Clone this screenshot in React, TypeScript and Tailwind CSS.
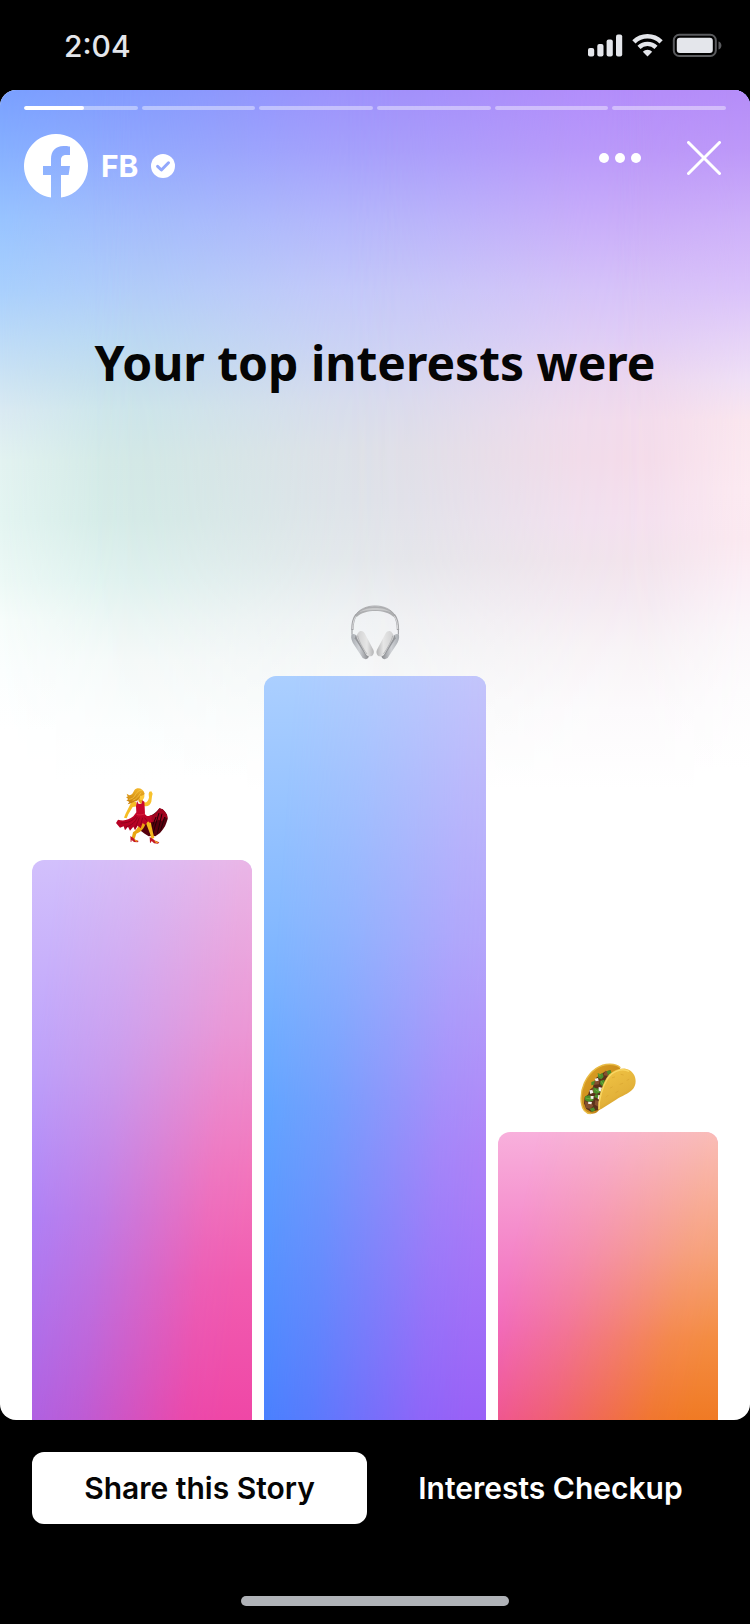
import React from "react";

function StatusBar() {
  return (
    <header className="flex h-[90px] items-center justify-between pr-7 pl-16 text-[#e4e6eb]">
      <time className="pt-0.5 text-[30px] leading-9 font-medium">2:04</time>
      <div className="flex items-center gap-[9px]">
        <svg className="h-6 w-[35px]" viewBox="0 0 35 24" fill="#e4e6eb" aria-hidden="true">
          <rect x="0" y="15" width="6.2" height="8.6" rx="2" />
          <rect x="9.3" y="11" width="6.2" height="12.6" rx="2" />
          <rect x="18.6" y="6.4" width="6.2" height="17.2" rx="2" />
          <rect x="28" y="1.6" width="6.2" height="22" rx="2" />
        </svg>
        <svg className="h-6 w-[31px]" viewBox="0 0 31 24" fill="none" stroke="#e4e6eb" aria-hidden="true">
          <path d="M1.9 8.8A19.5 19.5 0 0 1 29.1 8.8" strokeWidth="4.6" />
          <path d="M7 14.3A12.2 12.2 0 0 1 24 14.3" strokeWidth="4.4" />
          <path d="M10.8 18.7A6.8 6.8 0 0 1 20.2 18.7L15.5 23.6Z" fill="#e4e6eb" stroke="none" />
        </svg>
        <svg className="h-6 w-[50px]" viewBox="0 0 50 24" aria-hidden="true">
          <rect x="1.8" y="1.8" width="42" height="21.2" rx="5.5" fill="none" stroke="#5a5b5e" strokeWidth="2" />
          <rect x="4.8" y="4.8" width="36" height="15.2" rx="3" fill="#e4e6eb" />
          <path d="M46.5 8.4C48.500 9 49.400 10.500 49.400 12.400S48.500 15.800 46.500 16.400Z" fill="#5a5b5e" />
        </svg>
      </div>
    </header>
  );
}

/* Vertical colour columns, each easing into the next from left to right. */
function SkyBackdrop() {
  return (
    <div className="absolute inset-0" aria-hidden="true">
      <div className="absolute inset-x-0 top-0 h-[700px] bg-[linear-gradient(to_bottom,#7aa0ff_0px,#86b0ff_60px,#98c4ff_130px,#a9d0fd_200px,#bddbf8_250px,#cde4f4_290px,#daeaf3_320px,#e3f3f1_370px,#e4f5f2_430px,#edf9f6_490px,#f7fdfb_530px,#fbfefe_580px,#ffffff_640px)]" />
      <div className="absolute inset-x-0 top-0 h-[700px] bg-[linear-gradient(to_bottom,#829cfe_0px,#90a9fe_60px,#a2bdfc_130px,#b0cdf9_200px,#bad9f2_250px,#c4dfec_290px,#cce6ea_320px,#d2e9e6_370px,#d4ebe7_430px,#dff2ef_490px,#ebf6f4_530px,#f5faf9_570px,#fcfefe_640px,#ffffff_690px)] [mask-image:linear-gradient(to_right,transparent_0%,rgb(0_0_0/0.34)_5%,rgb(0_0_0/0.86)_13%,black_18%)]" />
      <div className="absolute inset-x-0 top-0 h-[700px] bg-[linear-gradient(to_bottom,#a091fb_0px,#a79ffb_60px,#b6b6fb_130px,#c5c8f9_200px,#cdd2f4_260px,#d8dbed_310px,#dee0e8_360px,#dfe2e9_410px,#e4e7eb_470px,#f0f2f4_530px,#f8fafa_610px,#ffffff_700px)] [mask-image:linear-gradient(to_right,transparent_12%,rgb(0_0_0/0.14)_21%,rgb(0_0_0/0.5)_33%,rgb(0_0_0/0.86)_44%,black_54%)]" />
      <div className="absolute inset-x-0 top-0 h-[700px] bg-[linear-gradient(to_bottom,#b48dfa_0px,#bb98f9_60px,#caacf9_130px,#d7c2f8_200px,#e1cdf5_250px,#ecd6ee_290px,#f3dbec_330px,#f4dbea_370px,#f4e0ef_430px,#f2e3ec_470px,#f4e9f1_510px,#f8f3f6_560px,#fcfafc_620px,#ffffff_700px)] [mask-image:linear-gradient(to_right,transparent_46%,rgb(0_0_0/0.14)_55%,rgb(0_0_0/0.5)_66%,rgb(0_0_0/0.86)_77%,black_87%)]" />
      <div className="absolute inset-x-0 top-0 h-[700px] bg-[linear-gradient(to_bottom,#b58df8_0px,#bd98f8_60px,#cdb0f9_130px,#dac2fa_200px,#e6d3f7_250px,#efe0f6_290px,#fae6ee_330px,#fceaf1_400px,#fbe9f0_450px,#fbeff6_490px,#fbf7fa_540px,#fdfcfd_600px,#ffffff_680px)] [mask-image:linear-gradient(to_right,transparent_82%,rgb(0_0_0/0.14)_87%,rgb(0_0_0/0.6)_94%,black_100%)]" />
    </div>
  );
}

function StoryProgress() {
  return (
    <div className="flex gap-1" role="progressbar" aria-label="Story progress" aria-valuenow={1} aria-valuemax={6}>
      <span className="h-1 flex-1 overflow-hidden rounded-full bg-white/40">
        <span className="block h-full w-[53%] rounded-full bg-white" />
      </span>
      {[2, 3, 4, 5, 6].map((n) => (
        <span key={n} className="h-1 flex-1 rounded-full bg-white/40" />
      ))}
    </div>
  );
}

function StoryHeader() {
  return (
    <div className="mt-6 flex items-start justify-between">
      <div className="flex items-center gap-[13px] text-white">
        <svg className="size-16" viewBox="0 0 64 64" fill="#fff" aria-hidden="true">
          <path d="M37 63.6A32 32 0 1 0 27 63.6V41H19V32H27V25.200C27 16.800 31.800 12 39.400 12C42.800 12 46 12.600 46 12.600V21H42C38.400 21 37 23.200 37 25.800V32H46L44.600 41H37Z" />
        </svg>
        <span className="text-[30px] leading-9 font-bold">FB</span>
        <svg className="size-6" viewBox="0 0 24 24" aria-label="Verified">
          <circle cx="12" cy="12" r="12" fill="#fff" />
          <path d="M6.600 12.400L10.400 16L17.500 8.800" fill="none" stroke="#93a8fc" strokeWidth="3" strokeLinecap="round" strokeLinejoin="round" />
        </svg>
      </div>
      <div className="mt-[7px] mr-[5px] flex items-center gap-[46px]">
        <button type="button" aria-label="More options">
          <svg className="h-[34px] w-[42px]" viewBox="0 0 42 34" fill="#fff">
            <circle cx="5" cy="17" r="5" />
            <circle cx="21" cy="17" r="5" />
            <circle cx="37" cy="17" r="5" />
          </svg>
        </button>
        <button type="button" aria-label="Close">
          <svg className="size-[34px]" viewBox="0 0 34 34" fill="none" stroke="#fff" strokeWidth="3" strokeLinecap="round">
            <path d="M1.500 1.500L32.500 32.500M32.500 1.500L1.500 32.500" />
          </svg>
        </button>
      </div>
    </div>
  );
}

function Dancer() {
  return (
    <svg className="h-[57px] w-[52px]" viewBox="80 50 156 171" role="img" aria-label="Dancing">
      <defs>
        <linearGradient id="dressRed" x1="0" y1="0" x2="0" y2="1">
          <stop offset="0" stopColor="#d0082e" />
          <stop offset="1" stopColor="#b00022" />
        </linearGradient>
        <linearGradient id="hairGold" x1="0" y1="0" x2="0" y2="1">
          <stop offset="0" stopColor="#f3b62c" />
          <stop offset="1" stopColor="#c27a08" />
        </linearGradient>
      </defs>
      <path d="M168 138C186 140 200 127 210 114L220 117L227 124L233 133L235 146L231 158L227 168L220 178L212 188L198 198L188 196L178 198L166 190L150 178Z" fill="#56000d" />
      <path d="M210 114L220 117L227 124L233 133L235 146L228 140L218 152L208 148L194 156L180 152L168 138C186 142 202 128 210 114Z" fill="#a0041f" />
      <path d="M209 128L190 192M218 130L204 190M226 140L214 180M200 140L180 190" stroke="#230006" strokeWidth="3" fill="none" />
      <path d="M168 152H184C186 168 190 182 195 203L186 206C183 188 174 172 168 152Z" fill="#f4b81c" />
      <path d="M150 158L170 152C168 170 158 184 141 190L136 206L127 204L131 186C140 180 147 172 150 158Z" fill="#e9a512" />
      <path d="M140 94C128 94 124 98 120 108L108 132L104 142L112 144L117 132L130 110L144 108Z" fill="#f6bd25" />
      <path d="M164 96C172 98 176 92 179 82L178 70L180 64L186 63L190 70L188 78L186 94C182 106 174 110 163 107Z" fill="#f8c22c" />
      <path d="M143 92L148 101L156 100L157 88L165 94L166 110L167 132C174 140 178 138 188 134L186 146L191 153L182 158L176 153L168 164L160 158L154 174L145 166L137 180L132 169L122 181L116 169L107 180L103 168L92 172L80 158L86 148C102 153 118 150 132 138L141 126L140 108Z" fill="url(#dressRed)" />
      <path d="M141 136C132 152 116 158 94 158M144 140C138 156 128 164 110 170M150 142L138 172M160 142L154 164M166 142L174 153" stroke="#7d0017" strokeWidth="2" fill="none" />
      <path d="M142 132C148 135 160 134 167 130" stroke="#e83049" strokeWidth="2" fill="none" />
      <path d="M150 76H160V90L155 101L147 92Z" fill="#e8a31a" />
      <path d="M148 64C154 60 164 64 165 72C166 80 164 88 158 89C152 90 145 84 146 74Z" fill="#ffcb3c" />
      <path d="M166 70C162 54 143 49 135 60C131 68 128 74 120 75L112 70L115 79L110 80L117 87L111 90L120 95L115 102C127 100 132 94 141 92C149 90 153 83 152 76C158 76 163 74 166 70Z" fill="url(#hairGold)" />
      <path d="M159 60C149 58 142 66 136 77C132 84 126 86 119 87M155 67C148 77 142 86 130 90" stroke="#f9cb4b" strokeWidth="2" fill="none" />
      <path d="M123 197L132 203L138 208L148 212L145 216L134 215L127 209L126 215H124ZM181 200L190 205L198 211L210 216L206 220L194 219L187 212L184 217H182Z" fill="#c31627" />
      <path d="M134 206L139 209L146 212L140 214ZM194 210L204 215L208 217L200 218Z" fill="#f2b31c" />
    </svg>
  );
}

function Headphones() {
  return (
    <svg className="h-[55px] w-[50px]" viewBox="90 74 150 165" role="img" aria-label="Headphones">
      <defs>
        <linearGradient id="cushion" x1="0" y1="0" x2="1" y2="0">
          <stop offset="0" stopColor="#cfcfd0" />
          <stop offset="0.600" stopColor="#e6e6e6" />
          <stop offset="1" stopColor="#b4b4b5" />
        </linearGradient>
        <linearGradient id="shell" x1="0" y1="0" x2="1" y2="0">
          <stop offset="0" stopColor="#a8acb1" />
          <stop offset="0.450" stopColor="#ced1d5" />
          <stop offset="1" stopColor="#88898d" />
        </linearGradient>
        <g id="earcup">
          <path d="M94 164C98 159 107 160 113 169L145 218C150 226 145 236 137 237L128 233L103 195C96 185 92 173 94 164Z" fill="url(#shell)" />
          <path d="M107 164L142 220L139 228L104 174Z" fill="#939599" />
          <path d="M115 157C120 150 129 151 134 159L160 208C164 217 160 227 151 228C145 229 141 226 137 220L112 176C108 169 110 162 115 157Z" fill="url(#cushion)" />
          <path d="M113 166C115 179 129 205 141 221" fill="none" stroke="#a5a6a8" strokeWidth="2" />
        </g>
      </defs>
      <path d="M97 149C97 127 100 114 109 103" fill="none" stroke="#a4a5a8" strokeWidth="7" />
      <path d="M234 149C234 127 231 114 222 103" fill="none" stroke="#a4a5a8" strokeWidth="7" />
      <path d="M98 146C98 127 102 115 110 105M233 146C233 127 229 115 221 105" fill="none" stroke="#d9d9db" strokeWidth="3" />
      <path d="M105 106C125 68 206 68 226 106L220 109C198 86 133 86 111 109Z" fill="#adaeb0" />
      <path d="M118 96C137 79 194 79 213 96C192 87 139 87 118 96Z" fill="#c9cacb" />
      <path d="M106 106C126 67 205 67 225 106" fill="none" stroke="#98999b" strokeWidth="2" />
      <path d="M96 148V163M235 148V163" fill="none" stroke="#94969a" strokeWidth="3" />
      <use href="#earcup" />
      <use href="#earcup" transform="translate(331 0) scale(-1 1)" />
    </svg>
  );
}

function Taco() {
  return (
    <svg className="h-[54px] w-[57px]" viewBox="90 66 171 162" role="img" aria-label="Taco">
      <defs>
        <linearGradient id="shellBack" x1="0" y1="0" x2="1" y2="1">
          <stop offset="0" stopColor="#e0a528" />
          <stop offset="1" stopColor="#b87810" />
        </linearGradient>
        <linearGradient id="shellFront" x1="0.300" y1="0" x2="0.800" y2="1">
          <stop offset="0" stopColor="#f0c344" />
          <stop offset="0.600" stopColor="#e3b23a" />
          <stop offset="1" stopColor="#c68a18" />
        </linearGradient>
      </defs>
      <path d="M211 83C196 69 164 69 139 85C108 106 89 148 94 188C97 209 108 221 123 221C135 221 143 217 150 206L190 140Z" fill="url(#shellBack)" />
      <path d="M211 83C196 69 164 69 139 85C108 106 89 148 94 188C97 209 108 221 123 221" fill="none" stroke="#e8bb45" strokeWidth="4" />
      <path d="M182 91L164 95L150 105L138 114L132 126L129 142L118 151L115 163L104 172L102 190L109 207L123 215L145 210L158 160L170 120Z" fill="#59301a" />
      <path d="M166 92L180 96L174 108L160 106ZM137 116L149 122L147 133L131 135ZM126 145L142 149L137 158L122 154ZM104 184L122 187L130 197L121 207L107 203ZM136 180L148 184L145 200L134 194Z" fill="#85502f" />
      <path d="M143 99L151 103L157 98L161 110L154 118L145 114ZM124 126L135 122L132 134L124 136ZM151 122L163 119L166 130L157 139L150 132ZM130 142L139 145L148 146L152 156L140 162L130 158ZM105 169L117 166L131 170L130 182L116 186L105 181ZM137 163L148 165L143 175L132 171ZM170 93L182 91L185 100L174 105ZM119 207L131 202L136 211L126 216Z" fill="#4c8e2a" />
      <path d="M145 102L152 108M107 174L126 178M136 149L147 156M154 124L160 134" fill="none" stroke="#75ad40" strokeWidth="3" />
      <path d="M134 116L144 114L146 122L137 124ZM146 141L156 143L154 155L146 152ZM118 151L127 150L130 158L121 162ZM145 165L153 166L149 180L143 176ZM115 185L126 186L124 193L114 191ZM122 168L131 168L130 177L122 176Z" fill="#f5f1eb" />
      <path d="M145 211C143 181 153 142 169 115C184 90 218 77 239 91C261 105 262 135 246 150C235 161 216 168 198 179L154 207Z" fill="url(#shellFront)" />
      <path d="M147 207C146 179 157 141 172 117C186 94 216 82 237 94" fill="none" stroke="#f9d765" strokeWidth="4" />
      <path d="M187 113L194 111M213 103L220 105M231 121L237 118M210 133L218 130M181 144L187 141M197 158L204 154M169 171L174 166" stroke="#d9a530" strokeWidth="2" strokeLinecap="round" />
    </svg>
  );
}

function InterestsChart() {
  return (
    <div className="mx-2 mt-auto grid grid-cols-[110fr_111fr_110fr] items-end gap-3">
      <div className="flex flex-col items-center gap-4">
        <Dancer />
        <div className="relative h-[560px] w-full overflow-hidden rounded-t-xl bg-[linear-gradient(to_bottom,#d2c0fc_0%,#bda0fa_38%,#ac82f9_64%,#a765ea_100%)]">
          <div className="absolute inset-0 bg-[linear-gradient(to_bottom,#ebb5e5_0%,#ec97d4_30%,#f276bd_55%,#f15cb0_75%,#ef47a6_100%)] [mask-image:linear-gradient(96deg,transparent_9%,rgb(0_0_0/0.3)_38%,rgb(0_0_0/0.93)_76%,black_90%)]" />
        </div>
      </div>
      <div className="flex flex-col items-center gap-4">
        <Headphones />
        <div className="relative h-[744px] w-full overflow-hidden rounded-t-xl bg-[linear-gradient(to_bottom,#abcfff_0%,#85b9ff_33%,#62a5ff_58%,#4384ff_100%)]">
          <div className="absolute inset-0 bg-[linear-gradient(to_bottom,#c5c3fb_0%,#b5a5fb_35%,#ad82f8_65%,#9861f7_100%)] [mask-image:linear-gradient(94deg,transparent_11%,rgb(0_0_0/0.26)_36%,rgb(0_0_0/0.88)_76%,black_92%)]" />
        </div>
      </div>
      <div className="flex flex-col items-center gap-4">
        <Taco />
        <div className="relative h-[288px] w-full overflow-hidden rounded-t-xl bg-[linear-gradient(to_bottom,#f8b0dc_0%,#f58dcc_34%,#f26abb_68%,#f0539b_100%)]">
          <div className="absolute inset-0 bg-[linear-gradient(to_bottom,#f9bdb4_0%,#f6a377_42%,#f48c42_72%,#f07a24_100%)] [mask-image:linear-gradient(102deg,transparent_14%,rgb(0_0_0/0.32)_40%,rgb(0_0_0/0.9)_76%,black_90%)]" />
        </div>
      </div>
    </div>
  );
}

export default function App() {
  return (
    <div className="flex min-h-screen flex-col bg-black font-['Inter',sans-serif]">
      <StatusBar />
      <main className="relative flex flex-1 flex-col overflow-hidden rounded-2xl bg-white">
        <SkyBackdrop />
        <section className="relative flex flex-1 flex-col px-6 pt-4">
          <StoryProgress />
          <StoryHeader />
          <h1 className="mt-[132px] mb-12 text-center font-['Noto_Sans',sans-serif] text-[48px] leading-[66px] font-bold text-[#050505]">
            Your top interests were
          </h1>
          <InterestsChart />
        </section>
      </main>
      <footer className="flex flex-col px-8 pt-8 pb-[18px]">
        <div className="flex gap-4">
          <button type="button" className="h-[72px] flex-1 rounded-xl bg-white text-[30px] leading-9 font-semibold text-[#050505]">
            Share this Story
          </button>
          <button type="button" className="h-[72px] flex-1 rounded-xl text-[30px] leading-9 font-semibold text-white">
            Interests Checkup
          </button>
        </div>
        <div className="mt-[72px] h-2.5 w-[268px] self-center rounded-full bg-[#b0b3b8]" />
      </footer>
    </div>
  );
}
